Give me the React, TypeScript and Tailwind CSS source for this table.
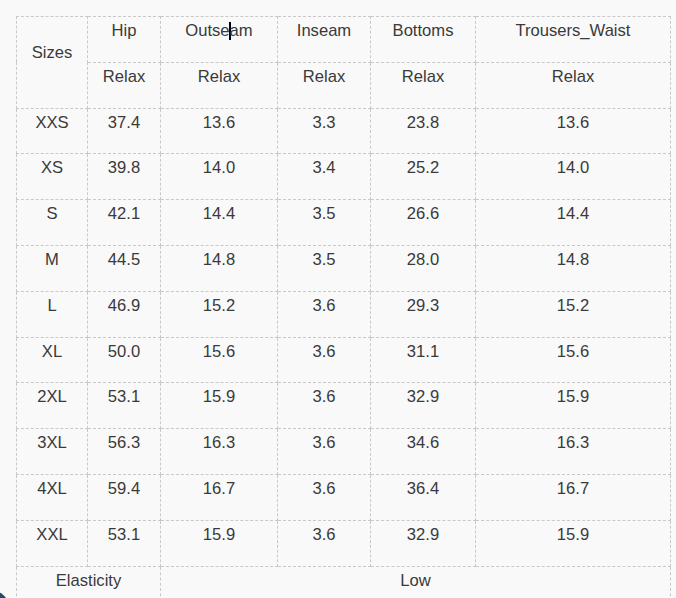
const rows = [
  ["XXS", "37.4", "13.6", "3.3", "23.8", "13.6"],
  ["XS", "39.8", "14.0", "3.4", "25.2", "14.0"],
  ["S", "42.1", "14.4", "3.5", "26.6", "14.4"],
  ["M", "44.5", "14.8", "3.5", "28.0", "14.8"],
  ["L", "46.9", "15.2", "3.6", "29.3", "15.2"],
  ["XL", "50.0", "15.6", "3.6", "31.1", "15.6"],
  ["2XL", "53.1", "15.9", "3.6", "32.9", "15.9"],
  ["3XL", "56.3", "16.3", "3.6", "34.6", "16.3"],
  ["4XL", "59.4", "16.7", "3.6", "36.4", "16.7"],
  ["XXL", "53.1", "15.9", "3.6", "32.9", "15.9"],
];

const cell =
  "border border-dashed border-[#c9c9c9] align-top text-center pt-[4px] leading-5 h-[45.8px] p-0";

export default function App() {
  return (
    <div
      className="min-h-screen bg-[#f9f9f9] pt-4 pl-4 text-[16.6px] text-[#3a3a3a]"
      style={{ fontFamily: '"Liberation Sans", Arial, sans-serif' }}
    >
      <table className="table-fixed border-collapse w-[654px]">
        <colgroup>
          <col className="w-[71px]" />
          <col className="w-[73px]" />
          <col className="w-[117px]" />
          <col className="w-[93px]" />
          <col className="w-[105px]" />
          <col className="w-[195px]" />
        </colgroup>
        <tbody>
          <tr>
            <td rowSpan={2} className={`${cell} pt-[26px]`}>
              Sizes
            </td>
            <td className={cell}>Hip</td>
            <td className={cell}>
              Outse
              <span className="inline-block w-[2px] h-[18px] bg-black align-[-4px] -mx-[1px]" />
              am
            </td>
            <td className={cell}>Inseam</td>
            <td className={cell}>Bottoms</td>
            <td className={cell}>Trousers_Waist</td>
          </tr>
          <tr>
            {Array.from({ length: 5 }).map((_, i) => (
              <td key={i} className={cell}>
                Relax
              </td>
            ))}
          </tr>
          {rows.map((r) => (
            <tr key={r[0] + r[1]}>
              {r.map((v, i) => (
                <td key={i} className={cell}>
                  {v}
                </td>
              ))}
            </tr>
          ))}
          <tr>
            <td colSpan={2} className={`${cell} pt-[2px]`}>
              Elasticity
            </td>
            <td colSpan={4} className={`${cell} pt-[2px]`}>
              Low
            </td>
          </tr>
        </tbody>
      </table>
      <div className="fixed left-[-30px] top-[590px] w-10 h-10 rounded-full bg-[#27476b]" />
    </div>
  );
}
